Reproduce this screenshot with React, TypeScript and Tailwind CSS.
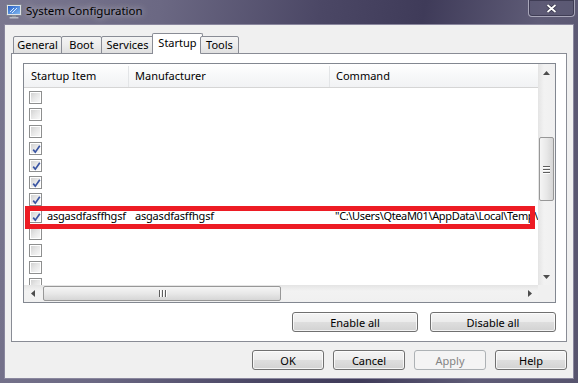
import React from 'react';

type Row = { checked: boolean; item?: string; maker?: string; command?: string };

const rows: Row[] = [
  { checked: false },
  { checked: false },
  { checked: false },
  { checked: true },
  { checked: true },
  { checked: true },
  { checked: true },
  {
    checked: true,
    item: 'asgasdfasffhgsf',
    maker: 'asgasdfasffhgsf',
    command: '"C:\\Users\\QteaM01\\AppData\\Local\\Temp\\',
  },
  { checked: false },
  { checked: false },
  { checked: false },
  { checked: false },
];

const tabs = [
  { label: 'General', w: 'w-[49px]' },
  { label: 'Boot', w: 'w-[41px]' },
  { label: 'Services', w: 'w-[53px]' },
  { label: 'Startup', w: 'w-[51px]', active: true },
  { label: 'Tools', w: 'w-[39px]' },
];

const winBtn =
  'flex h-[20px] items-center justify-center rounded-[3px] border text-[11px] leading-none';
const btnOn =
  'border-[#707070] text-black bg-[linear-gradient(#f4f4f4_0%,#ececec_48%,#dedede_52%,#d2d2d2_100%)] shadow-[inset_0_0_0_1px_rgba(255,255,255,0.75)]';
const btnOff = 'border-[#adb2b5] bg-[#f4f4f4] text-[#838383]';

function CheckBox({ checked }: { checked: boolean }) {
  return (
    <span className="mt-[3px] flex h-[13px] w-[13px] shrink-0 border border-[#8e8f8f] bg-white p-px">
      <span className="relative block h-full w-full bg-[linear-gradient(135deg,#d2d2d2_0%,#e6e6e6_45%,#f8f8f8_100%)]">
        {checked && (
          <svg width="11" height="11" viewBox="0 0 11 11" className="absolute inset-0">
            <path d="M2.2 5.6 L4.3 8.2 L8.8 1.8" fill="none" stroke="#3a55a3" strokeWidth="1.7" />
          </svg>
        )}
      </span>
    </span>
  );
}

function Arrow({ dir }: { dir: 'up' | 'down' | 'left' | 'right' }) {
  const d = {
    up: 'M3.5 0 L7 4 L0 4Z',
    down: 'M0 0 L7 0 L3.5 4Z',
    left: 'M4 0 L4 7 L0 3.5Z',
    right: 'M0 0 L4 3.5 L0 7Z',
  }[dir];
  const vertical = dir === 'up' || dir === 'down';
  return (
    <svg width={vertical ? 7 : 4} height={vertical ? 4 : 7}>
      <path d={d} fill="#4d4d4d" />
    </svg>
  );
}

function VScroll() {
  return (
    <div className="flex w-[17px] flex-col bg-[linear-gradient(90deg,#e4e4e4,#f2f2f2_35%,#f0f0f0)]">
      <div className="flex h-[17px] items-center justify-center">
        <Arrow dir="up" />
      </div>
      <div className="flex-1">
        <div className="mx-px mt-[56px] flex h-[64px] w-[15px] items-center justify-center rounded-[2px] border border-[#979797] bg-[linear-gradient(90deg,#f5f5f5,#e8e8e8_50%,#d6d6d6)]">
          <div className="flex flex-col gap-[2px]">
            <span className="block h-px w-[7px] bg-[#5e5e5e] shadow-[0_1px_0_#fff]" />
            <span className="block h-px w-[7px] bg-[#5e5e5e] shadow-[0_1px_0_#fff]" />
            <span className="block h-px w-[7px] bg-[#5e5e5e] shadow-[0_1px_0_#fff]" />
          </div>
        </div>
      </div>
      <div className="flex h-[17px] items-center justify-center">
        <Arrow dir="down" />
      </div>
    </div>
  );
}

function HScroll() {
  return (
    <div className="flex h-[17px] flex-1 items-center bg-[linear-gradient(#e4e4e4,#f2f2f2_35%,#f0f0f0)]">
      <div className="flex h-[17px] w-[17px] items-center justify-center">
        <Arrow dir="left" />
      </div>
      <div className="ml-[2px] flex h-[15px] w-[238px] items-center justify-center rounded-[2px] border border-[#979797] bg-[linear-gradient(#f5f5f5,#e8e8e8_50%,#d6d6d6)]">
        <div className="flex gap-[2px]">
          <span className="block h-[7px] w-px bg-[#5e5e5e] shadow-[1px_0_0_#fff]" />
          <span className="block h-[7px] w-px bg-[#5e5e5e] shadow-[1px_0_0_#fff]" />
          <span className="block h-[7px] w-px bg-[#5e5e5e] shadow-[1px_0_0_#fff]" />
        </div>
      </div>
      <div className="flex-1" />
      <div className="flex h-[17px] w-[17px] items-center justify-center">
        <Arrow dir="right" />
      </div>
    </div>
  );
}

function StartupList() {
  return (
    <div className="flex h-[240px] w-[533px] flex-col border border-[#828790] bg-white">
      <div className="flex h-[221px]">
        <div className="flex min-w-0 flex-1 flex-col">
          {/* column headers */}
          <div className="flex h-[24px] shrink-0 items-center border-b border-[#d5d5d5] bg-[linear-gradient(#ffffff,#f7f8f9_50%,#f1f2f4)] pt-[2px] text-[11px] text-black">
            <div className="flex h-full w-[105px] items-center border-r border-[#e3e5e7] pl-[7px]">Startup Item</div>
            <div className="flex h-full w-[201px] items-center border-r border-[#e3e5e7] pl-[6px]">Manufacturer</div>
            <div className="flex h-full flex-1 items-center pl-[6px]">Command</div>
          </div>
          {/* rows */}
          <div className="relative flex-1 overflow-hidden">
            {rows.map((r, i) => (
              <div key={i} className="flex h-[17px] items-start whitespace-nowrap text-[11px] leading-[17px] text-black">
                <div className="flex w-[105px] shrink-0 items-start pl-[5px]">
                  <CheckBox checked={r.checked} />
                  {r.item && <span className="ml-[5px] tracking-[-0.2px]">{r.item}</span>}
                </div>
                <div className="w-[201px] shrink-0 pl-[6px] tracking-[-0.2px]">{r.maker}</div>
                <div className="shrink-0 pl-[5px] tracking-[-0.35px]">{r.command}</div>
              </div>
            ))}
            {/* red highlight drawn over the list */}
            <div className="absolute left-[1px] top-[118px] h-[23px] w-[510px] border-[5px] border-[#ed1c24]" />
          </div>
        </div>
        <VScroll />
      </div>
      <div className="flex h-[17px]">
        <HScroll />
        <div className="h-[17px] w-[17px] bg-[#f0f0f0]" />
      </div>
    </div>
  );
}

function TitleIcon() {
  return (
    <svg width="16" height="16" viewBox="0 0 16 16">
      <defs>
        <linearGradient id="scr" x1="0" y1="0" x2="1" y2="1">
          <stop offset="0" stopColor="#2a5fc4" />
          <stop offset="1" stopColor="#7fb8f0" />
        </linearGradient>
      </defs>
      <rect x="0.5" y="1.5" width="15" height="11" rx="1" fill="#dfe2e7" stroke="#7b818b" />
      <rect x="2" y="3" width="12" height="8" fill="url(#scr)" />
      <path d="M4 9 L8 5 M6 10 L11 5" stroke="#d8ecff" strokeWidth="1" />
      <rect x="6" y="12.5" width="4" height="1.5" fill="#8d939b" />
      <rect x="3.5" y="14" width="9" height="1.5" rx="0.5" fill="#b9bec5" />
    </svg>
  );
}

export default function App() {
  return (
    <div className="relative flex h-[383px] w-[578px] flex-col overflow-hidden bg-[linear-gradient(100deg,#7a778f_0%,#6b6883_25%,#4b4765_50%,#3f3b59_66%,#5f5c77_84%,#57546e_100%)] font-['Noto_Sans',sans-serif]">
      {/* title bar */}
      <div className="flex h-[24px] shrink-0 items-start">
        <div className="ml-[6px] mt-[3px]">
          <TitleIcon />
        </div>
        <span className="ml-[4px] mt-[3px] text-[11.5px] leading-[16px] text-black [text-shadow:0_0_6px_rgba(255,255,255,0.55),0_0_10px_rgba(255,255,255,0.35)]">
          System Configuration
        </span>
        <div className="ml-auto mr-[3px] flex h-[17px] w-[47px] items-center justify-center rounded-b-[4px] border border-t-0 border-[#a9a7ba] bg-[#5b5874]/40 shadow-[inset_0_0_0_1px_rgba(40,38,60,0.55)]">
          <svg width="11" height="9" viewBox="0 0 11 9">
            <path d="M1.5 1 L9.5 8 M9.5 1 L1.5 8" stroke="#2e2c40" strokeWidth="3.2" />
            <path d="M1.5 1 L9.5 8 M9.5 1 L1.5 8" stroke="#ffffff" strokeWidth="1.8" />
          </svg>
        </div>
      </div>

      {/* client area */}
      <div className="mx-[4px] flex h-[355px] shrink-0 flex-col border border-[#8a879e] bg-[#f0f0f0]">
        <div className="relative z-10 ml-[8px] mt-[8px] flex h-[21px] items-end text-[11px] text-black">
          {tabs.map((t) =>
            t.active ? (
              <div
                key={t.label}
                className={`-mx-[2px] flex h-[21px] ${t.w} items-center justify-center rounded-t-[2px] border border-b-0 border-[#898c95] bg-white pb-[2px]`}
              >
                {t.label}
              </div>
            ) : (
              <div
                key={t.label}
                className={`flex h-[18px] ${t.w} items-center justify-center rounded-t-[2px] border border-[#898c95] bg-[linear-gradient(#f4f4f4,#ececec_50%,#e0e0e0)] -ml-px first:ml-0`}
              >
                {t.label}
              </div>
            )
          )}
        </div>

        <div className="-mt-px ml-[6px] flex h-[289px] w-[556px] flex-col border border-[#898c95] bg-white pl-[11px] pr-[10px] pt-[9px]">
          <StartupList />
          <div className="mt-[9px] flex justify-end gap-[12px]">
            <button className={`${winBtn} ${btnOn} w-[126px]`}>Enable all</button>
            <button className={`${winBtn} ${btnOn} w-[126px]`}>Disable all</button>
          </div>
        </div>

        <div className="mt-[8px] flex justify-end gap-[9px] pr-[6px]">
          <button className={`${winBtn} ${btnOn} w-[72px]`}>OK</button>
          <button className={`${winBtn} ${btnOn} w-[72px]`}>Cancel</button>
          <button className={`${winBtn} ${btnOff} w-[72px]`}>Apply</button>
          <button className={`${winBtn} ${btnOn} w-[72px]`}>Help</button>
        </div>
      </div>
    </div>
  );
}
